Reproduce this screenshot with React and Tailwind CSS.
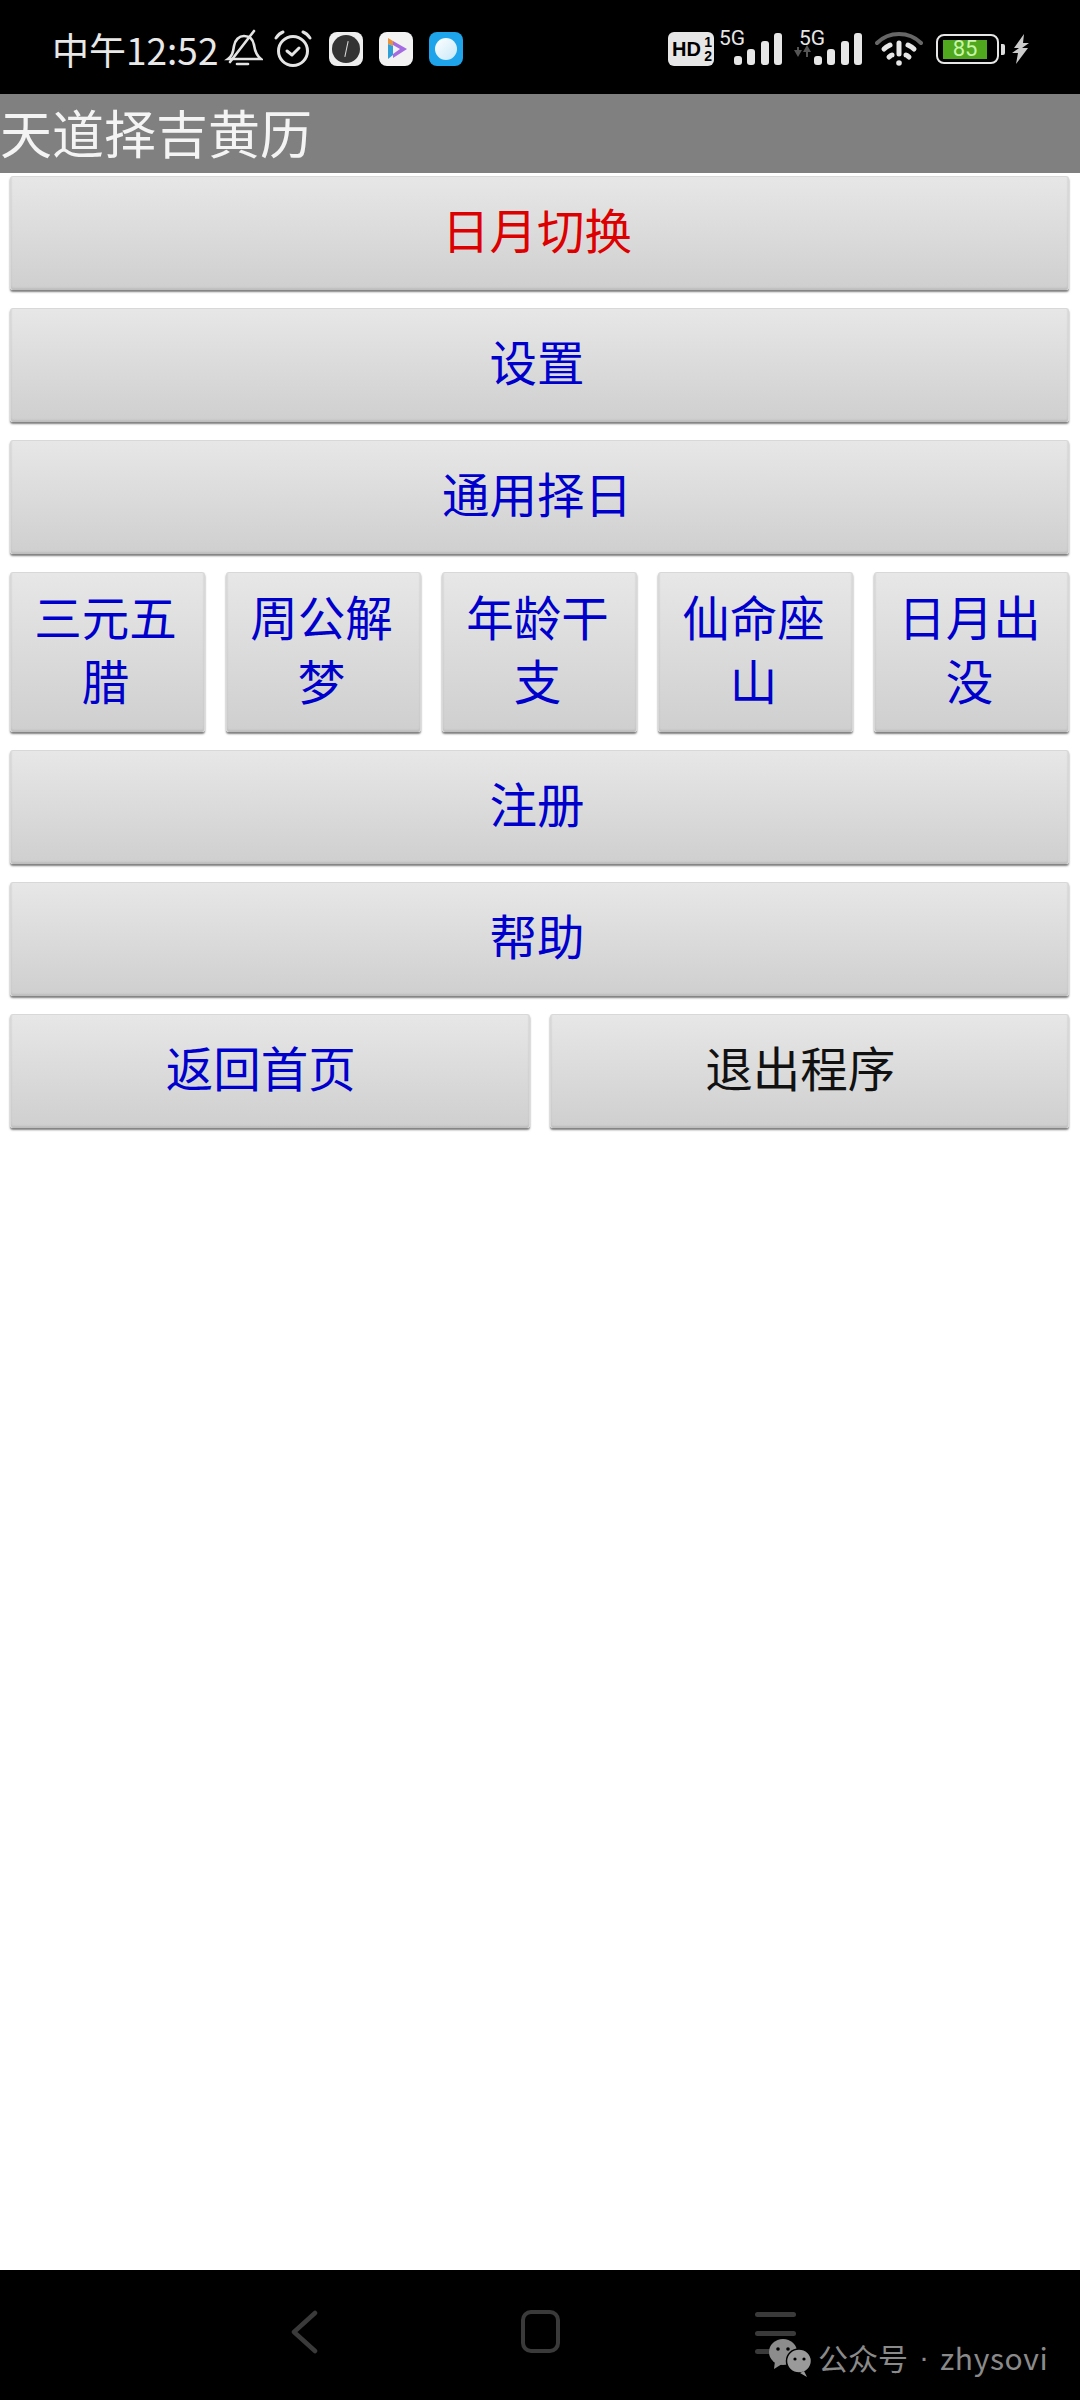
const CJK = 'font-["Noto_Sans_CJK_SC","Noto_Sans",sans-serif]'

// 灰色渐变按钮
function Btn({ children, color = 'text-[#0000cc]', className = 'h-[114px] pb-[10px] pr-[5px]' }) {
  return (
    <button
      type="button"
      className={`${className} min-w-0 flex-1 rounded-[3px] border-t border-l border-r border-[#d8d8d8] bg-linear-to-b from-[#e7e7e7] to-[#cfcfcf] shadow-[0_2px_2px_#7f7f7f,inset_0_-2px_2px_#bdbdbd] text-[47.5px] leading-[64px] ${color}`}
    >
      {children}
    </button>
  )
}

function Signal({ arrows }) {
  return (
    <svg width="68" height="36" viewBox="0 0 68 36" className="block">
      {arrows && (
        <g fill="#555">
          <path d="M0 19h3v-3h2v3h3l-4 7z" />
          <path d="M13 14l4 7h-3v5h-2v-5H9z" />
        </g>
      )}
      <g fill="#e6e6e6">
        <rect x="20" y="25" width="8" height="9" rx="3" />
        <rect x="33" y="18" width="8" height="16" rx="3" />
        <rect x="47" y="10" width="8" height="24" rx="3" />
        <rect x="60" y="2" width="8" height="32" rx="3" />
      </g>
    </svg>
  )
}

function StatusBar() {
  return (
    <div className={`flex h-[94px] shrink-0 items-center bg-black pl-[52px] pt-[8px] ${CJK}`}>
      <span className="-mt-[4px] font-['Noto_Sans_CJK_SC'] text-[37px] leading-none text-[#e8e8e8]">中午12:52</span>
      {/* 静音铃 */}
      <svg width="40" height="40" viewBox="0 0 40 40" fill="none" stroke="#e4e4e4" strokeWidth="2.6" strokeLinecap="round" className="-mt-[4px] ml-[5px]">
        <path d="M5 30c4-3 5-6 6-13 1-6 5-10 10-10s9 3 10 9c1 7 3 11 7 14z" />
        <path d="M14 35h11" />
        <path d="M31 2L7 33" />
      </svg>
      {/* 闹钟 */}
      <svg width="40" height="40" viewBox="0 0 40 40" fill="none" stroke="#e4e4e4" strokeWidth="3" strokeLinecap="round" strokeLinejoin="round" className="-mt-[4px] ml-[10px]">
        <circle cx="20" cy="22" r="14.5" />
        <path d="M14 22l5 4 7-7" />
        <path d="M3 9c2-3 4-5 7-6" />
        <path d="M37 9c-2-3-4-5-7-6" />
      </svg>
      <div className="-mt-[4px] ml-[16px] flex size-[34px] items-center justify-center rounded-[8px] bg-[#eeeeee]">
        <div className="flex size-[28px] items-center justify-center rounded-full bg-[#333333]">
          <div className="h-[16px] w-px rotate-12 bg-[#dddddd]" />
        </div>
      </div>
      <div className="-mt-[4px] ml-[16px] flex size-[34px] items-center justify-center rounded-[8px] bg-[#f2f2f2]">
        <svg width="24" height="28" viewBox="0 0 24 28">
          <path d="M4 3l5 3v5l-5-2z" fill="#e8923a" />
          <path d="M4 9l5 2v9l-5 4z" fill="#2f9fd8" />
          <path d="M9 6l14 8-14 9 0-4 7-5-7-4z" fill="#a56be0" />
        </svg>
      </div>
      <div className="-mt-[4px] ml-[16px] flex size-[34px] items-center justify-center rounded-[8px] bg-[#1ea4ea]">
        <div className="size-[22px] rounded-full bg-linear-to-br from-[#ffffff] to-[#c6e8f8]" />
      </div>

      <div className="-mt-[4px] ml-auto flex items-center pr-[50px]">
        <div className="flex h-[34px] w-[46px] items-center justify-between rounded-[6px] bg-[#e6e6e6] pl-[4px] pr-[2px] font-['Liberation_Sans'] font-bold text-black">
          <span className="text-[20px] leading-none">HD</span>
          <span className="flex flex-col text-[14px] leading-[14px]">
            <span>1</span>
            <span>2</span>
          </span>
        </div>
        <div className="relative ml-[5px] h-[36px] w-[63px]">
          <span className="absolute -top-[3px] left-0 font-['Roboto'] text-[21px] leading-[20px] text-[#e6e6e6]">5G</span>
          <div className="absolute -left-[5px] top-0">
            <Signal />
          </div>
        </div>
        <div className="relative ml-[12px] h-[36px] w-[68px]">
          <span className="absolute -top-[3px] left-[5px] font-['Roboto'] text-[21px] leading-[20px] text-[#e6e6e6]">5G</span>
          <Signal arrows />
        </div>
        {/* wifi */}
        <svg width="48" height="36" viewBox="0 0 48 36" fill="none" strokeLinecap="round" className="ml-[13px]">
          <path d="M2 12C14 0 34 0 46 12" stroke="#666666" strokeWidth="4" />
          <path d="M9 18c2-2 4-3 6-4" stroke="#e6e6e6" strokeWidth="5" />
          <path d="M39 18c-2-2-4-3-6-4" stroke="#e6e6e6" strokeWidth="5" />
          <path d="M17 24c-1 0-2 1-3 2" stroke="#e6e6e6" strokeWidth="5" />
          <path d="M31 24c1 0 2 1 3 2" stroke="#e6e6e6" strokeWidth="5" />
          <path d="M24 12v11" stroke="#e6e6e6" strokeWidth="5" />
          <circle cx="24" cy="32" r="2.8" fill="#e6e6e6" />
        </svg>
        {/* 电量 */}
        <div className="ml-[13px] flex h-[30px] w-[63px] items-center rounded-[8px] border-[2.5px] border-[#e6e6e6] pl-[5px]">
          <div className="flex h-[19px] w-[44px] items-center justify-center bg-[#4fa81e] font-['Roboto'] text-[22px] leading-none text-[#c9f5a8]">85</div>
        </div>
        <div className="ml-[2px] h-[11px] w-[4px] rounded-r-[2px] bg-[#dddddd]" />
        <svg width="18" height="30" viewBox="0 0 18 30" className="ml-[7px]">
          <path d="M12 0L2 14l5 0-7 5 6 0-2 11 12-16-6 0 7-5-6 0z" fill="#cccccc" />
        </svg>
      </div>
    </div>
  )
}

function NavBar() {
  return (
    <div className="relative flex h-[130px] shrink-0 items-start bg-black pl-[290px] pt-[40px]">
      <svg width="28" height="44" viewBox="0 0 28 44" fill="none" stroke="#3a3a3a" strokeWidth="4.5" strokeLinecap="round" strokeLinejoin="round">
        <path d="M25 3L4 22l21 19" />
      </svg>
      <div className="ml-[203px] h-[43px] w-[39px] rounded-[10px] border-[4.5px] border-[#3a3a3a]" />
      <div className="ml-[195px] mt-[2px] flex h-[42px] w-[41px] flex-col justify-between">
        <div className="h-[5px] rounded-full bg-[#3a3a3a]" />
        <div className="h-[5px] rounded-full bg-[#3a3a3a]" />
        <div className="h-[5px] rounded-full bg-[#3a3a3a]" />
      </div>
      {/* 水印 */}
      <div className="absolute left-[768px] top-[67px] flex items-center">
        <svg width="44" height="40" viewBox="0 0 44 40" fill="#8c8c8c">
          <ellipse cx="15" cy="15" rx="14" ry="13" />
          <path d="M7 24l-1 8 8-5z" />
          <ellipse cx="31" cy="24" rx="12.5" ry="12" fill="#9a9a9a" stroke="#000" strokeWidth="1.5" />
          <path d="M36 34l3 6-7-4z" fill="#9a9a9a" />
          <circle cx="10" cy="12" r="1.8" fill="#000" />
          <circle cx="20" cy="12" r="1.8" fill="#000" />
          <circle cx="27" cy="22" r="1.6" fill="#000" />
          <circle cx="36" cy="22" r="1.6" fill="#000" />
        </svg>
        <div className={`ml-[6px] flex text-[30px] leading-none text-[#8a8a8a] ${CJK}`}>
          <span>公众号</span>
          <span className="mx-[11px] font-['Liberation_Sans']">·</span>
          <span className="tracking-[0.6px]">zhysovi</span>
        </div>
      </div>
    </div>
  )
}

export default function App() {
  const rowItems = ['三元五腊', '周公解梦', '年龄干支', '仙命座山', '日月出没']

  return (
    <div className={`flex h-[2400px] w-[1080px] flex-col overflow-hidden bg-white ${CJK}`}>
      <StatusBar />
      <div className="flex h-[79px] shrink-0 items-center bg-[#808080] pb-[4px] text-[52px] leading-none text-[#f4f4f4]">天道择吉黄历</div>

      <div className="flex flex-1 flex-col gap-[18px] pl-[10px] pr-[11px] pt-[3px]">
        <div className="flex">
          <Btn color="text-[#dd0000]">日月切换</Btn>
        </div>
        <div className="flex">
          <Btn>设置</Btn>
        </div>
        <div className="flex">
          <Btn>通用择日</Btn>
        </div>
        <div className="flex gap-[21px]">
          {rowItems.map((t) => (
            <Btn key={t} className="h-[160px] pb-[10px] pl-[18px] pr-[22px]">{t}</Btn>
          ))}
        </div>
        <div className="flex">
          <Btn>注册</Btn>
        </div>
        <div className="flex">
          <Btn>帮助</Btn>
        </div>
        <div className="flex gap-[20px]">
          <Btn className="h-[114px] pb-[10px] pr-[18px]">返回首页</Btn>
          <Btn color="text-[#111111]" className="h-[114px] pb-[10px] pr-[18px]">退出程序</Btn>
        </div>
      </div>

      <NavBar />
    </div>
  )
}
